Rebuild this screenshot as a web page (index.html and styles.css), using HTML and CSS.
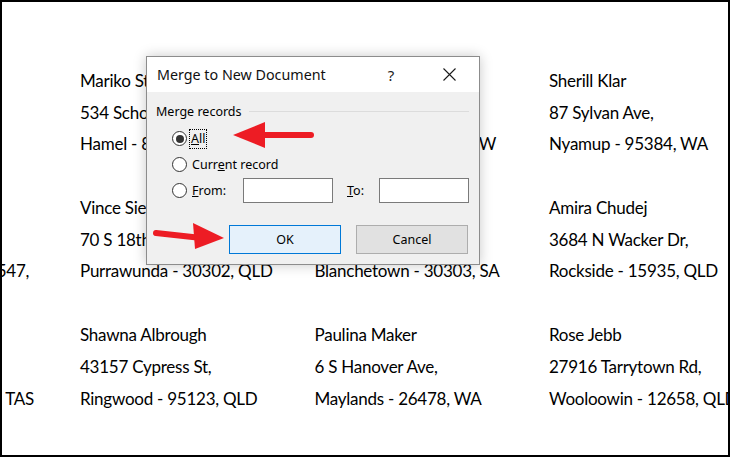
FILE: index.html
```html
<!DOCTYPE html>
<html lang="en">
<head>
<meta charset="utf-8">
<title>Merge to New Document</title>
<link rel="stylesheet" href="styles.css">
</head>
<body>
<div class="frame">
  <div class="labels">
    <div class="label"><div>Ilene Eroman</div><div>2853 S Central Expy,</div><div>Glen Elg - 5651, QLD</div></div>
    <div class="label"><div>Mariko Stayer</div><div>534 Schoenborn Blvd,</div><div>Hamel - 84373, WA</div></div>
    <div class="label"><div>Gerardo Woodka</div><div>69206 Jackson Ave,</div><div>Talmalmoi - 87011, NSW</div></div>
    <div class="label"><div>Sherill Klar</div><div>87 Sylvan Ave,</div><div>Nyamup - 95384, WA</div></div>

    <div class="label"><div>Ernie Stenseth</div><div>45 E Liberty St,</div><div>Ridgefield Park - 007547,</div></div>
    <div class="label"><div>Vince Siena</div><div>70 S 18th Pl,</div><div>Purrawunda - 30302, QLD</div></div>
    <div class="label"><div>Theron Jarding</div><div>8839 Ventura Blvd,</div><div>Blanchetown - 30303, SA</div></div>
    <div class="label"><div>Amira Chudej</div><div>3684 N Wacker Dr,</div><div>Rockside - 15935, QLD</div></div>

    <div class="label"><div>Delisa Crupi</div><div>47565 W Grand Ave,</div><div>Eugowra Plains - 705, TAS</div></div>
    <div class="label"><div>Shawna Albrough</div><div>43157 Cypress St,</div><div>Ringwood - 95123, QLD</div></div>
    <div class="label"><div>Paulina Maker</div><div>6 S Hanover Ave,</div><div>Maylands - 26478, WA</div></div>
    <div class="label"><div>Rose Jebb</div><div>27916 Tarrytown Rd,</div><div>Wooloowin - 12658, QLD</div></div>
  </div>

  <div class="dialog">
    <div class="titlebar">
      <div class="title">Merge to New Document</div>
      <div class="tb-btn help">?</div>
      <div class="tb-btn close">
        <svg width="13" height="13" viewBox="0 0 13 13"><path d="M0.5 0.5 L12.5 12.5 M12.5 0.5 L0.5 12.5" stroke="#1a1a1a" stroke-width="1.1" fill="none"/></svg>
      </div>
    </div>
    <div class="body">
      <div class="legend"><span>Merge records</span><span class="rule"></span></div>
      <div class="options">
        <div class="opt"><span class="radio checked"></span><span class="focus"><u>A</u>ll</span></div>
        <div class="opt"><span class="radio"></span><span>Curr<u>e</u>nt record</span></div>
        <div class="opt"><span class="radio"></span><span class="lbl-from"><u>F</u>rom:</span><span class="field"></span><span class="lbl-to"><u>T</u>o:</span><span class="field"></span></div>
      </div>
      <div class="buttons">
        <div class="btn default">OK</div>
        <div class="btn">Cancel</div>
      </div>
    </div>
  </div>

  <svg class="arrows" width="730" height="457" viewBox="0 0 730 457">
    <line x1="262" y1="135" x2="311" y2="135" stroke="#ed1c24" stroke-width="6" stroke-linecap="round"/>
    <polygon points="233,135 265,122 265,148" fill="#ed1c24"/>
    <line x1="156" y1="233" x2="197" y2="237.5" stroke="#ed1c24" stroke-width="6" stroke-linecap="round"/>
    <polygon points="193,223 224,238 195,249" fill="#ed1c24"/>
  </svg>
</div>
</body>
</html>
```

FILE: styles.css
```css
html, body {
  margin: 0;
  padding: 0;
  background: #fff;
}

.frame {
  position: relative;
  width: 730px;
  height: 457px;
  box-sizing: border-box;
  border: 2px solid #000;
  overflow: hidden;
  background: #fff;
}

.labels {
  display: grid;
  grid-template-columns: repeat(4, 234.5px);
  row-gap: 32.4px;
  margin-left: -156.5px;
  padding-top: 63px;
}

.label {
  font-family: Lato, "Liberation Sans", sans-serif;
  font-size: 17px;
  letter-spacing: -0.25px;
  line-height: 31.6px;
  color: #000;
  white-space: nowrap;
}

.dialog {
  position: absolute;
  left: 144px;
  top: 54px;
  width: 334px;
  box-sizing: border-box;
  border: 1px solid #8c8c8c;
  background: #f0f0f0;
  box-shadow: 0 0 12px rgba(0, 0, 0, 0.22);
  font-family: "Noto Sans", "Open Sans", sans-serif;
  color: #000;
}

.titlebar {
  height: 35px;
  display: flex;
  align-items: center;
  background: #fff;
}

.title {
  flex: 1;
  padding-left: 10px;
  font-size: 14.3px;
  color: #111;
}

.tb-btn {
  display: flex;
  align-items: center;
  justify-content: center;
  height: 35px;
}

.help {
  width: 40px;
  font-size: 15px;
  color: #222;
}

.close {
  width: 46px;
  margin-left: 15px;
  margin-right: 7px;
}

.body {
  padding: 11px 10px 10px 9px;
  font-size: 12.5px;
}

.legend {
  display: flex;
  align-items: center;
  height: 16px;
}

.rule {
  flex: 1;
  height: 1px;
  margin-left: 7px;
  background: #dcdcdc;
}

.options {
  margin-top: 6.5px;
  padding-left: 16px;
}

.opt {
  display: flex;
  align-items: center;
  height: 26px;
}

.radio {
  position: relative;
  width: 15px;
  height: 15px;
  box-sizing: border-box;
  border: 1px solid #333;
  border-radius: 50%;
  background: #fff;
  margin-right: 5px;
  flex: none;
}

.radio.checked::after {
  content: "";
  position: absolute;
  left: 2.5px;
  top: 2.5px;
  width: 8px;
  height: 8px;
  border-radius: 50%;
  background: #333;
}

.focus {
  margin-left: -3px;
  padding: 1px 1px;
  border: 1px dotted #000;
  line-height: 16px;
}

.lbl-from {
  width: 51px;
}

.lbl-to {
  width: 32px;
  margin-left: 14px;
}

.field {
  width: 90px;
  height: 25px;
  box-sizing: border-box;
  border: 1px solid #7a7a7a;
  background: #fff;
}

.buttons {
  display: flex;
  gap: 15px;
  margin-top: 21.5px;
  padding-left: 73px;
}

.btn {
  width: 112px;
  height: 29px;
  box-sizing: border-box;
  border: 1px solid #adadad;
  background: #e1e1e1;
  display: flex;
  align-items: center;
  justify-content: center;
}

.btn.default {
  border-color: #0078d7;
  background: #e5f1fb;
}

.arrows {
  position: absolute;
  left: -2px;
  top: -2px;
  pointer-events: none;
}
```
